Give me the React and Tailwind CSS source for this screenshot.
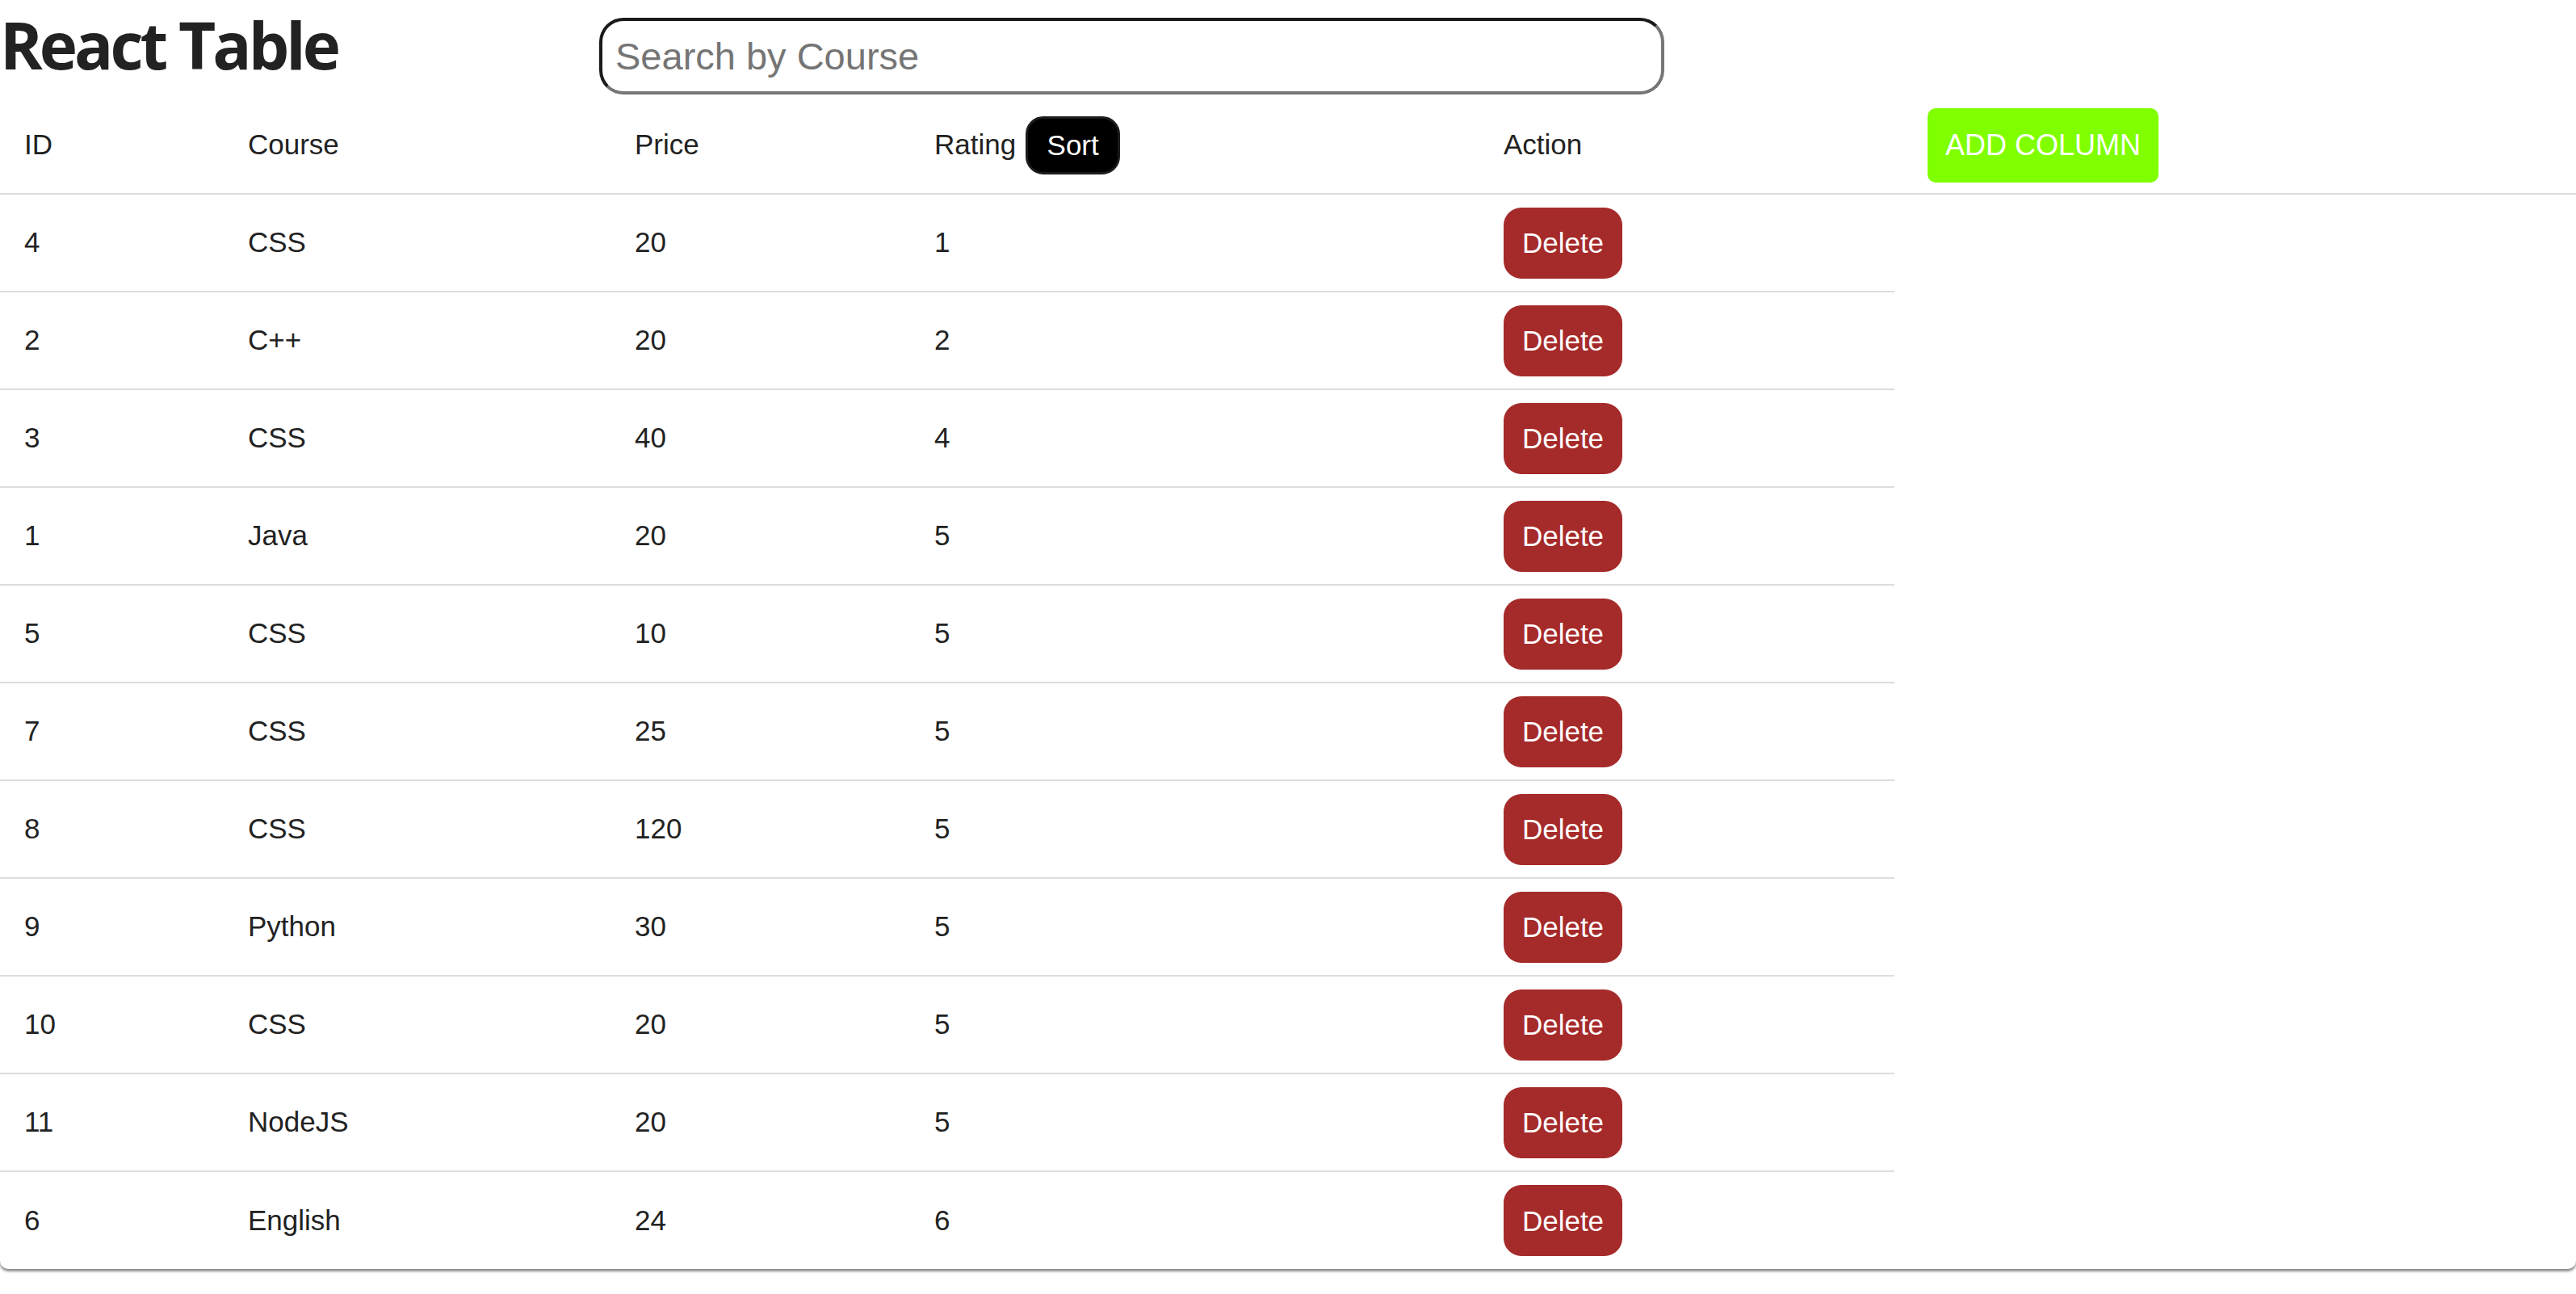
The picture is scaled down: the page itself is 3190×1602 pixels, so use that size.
import { useState } from 'react';

const initialCourses = [
    { id: 4, course: 'CSS', price: 20, rating: 1 },
    { id: 2, course: 'C++', price: 20, rating: 2 },
    { id: 3, course: 'CSS', price: 40, rating: 4 },
    { id: 1, course: 'Java', price: 20, rating: 5 },
    { id: 5, course: 'CSS', price: 10, rating: 5 },
    { id: 7, course: 'CSS', price: 25, rating: 5 },
    { id: 8, course: 'CSS', price: 120, rating: 5 },
    { id: 9, course: 'Python', price: 30, rating: 5 },
    { id: 10, course: 'CSS', price: 20, rating: 5 },
    { id: 11, course: 'NodeJS', price: 20, rating: 5 },
    { id: 6, course: 'English', price: 24, rating: 6 },
];

// column widths follow the screenshot, last column holds the add button
const cols = 'grid grid-cols-[277px_479px_371px_705px_514px]';

export default function App() {
    const [courses, setCourses] = useState(initialCourses);
    const [search, setSearch] = useState('');

    const visible = courses.filter(c =>
        c.course.toLowerCase().includes(search.toLowerCase())
    );

    const handleDelete = (id) => {
        setCourses(prev => prev.filter(c => c.id !== id));
    };

    const handleSort = () => {
        setCourses(prev => [...prev].sort((a, b) => a.rating - b.rating));
    };

    return (
        <div className="min-h-screen bg-white text-[#222] font-['Liberation_Sans',Arial,sans-serif]">
            {/* header : titre + recherche */}
            <div className="flex items-start h-[120px]">
                <h1 className="w-[742px] shrink-0 mt-[15px] text-[80px] leading-none font-bold text-[#222] font-['Open_Sans','Noto_Sans',sans-serif] tracking-[-4px]">
                    React Table
                </h1>
                <input
                    type="text"
                    value={search}
                    onChange={(e) => setSearch(e.target.value)}
                    placeholder="Search by Course"
                    className="mt-[22px] w-[1319px] h-[95px] rounded-[30px] border-4 border-t-[#1a1a1a] border-l-[#1a1a1a] border-b-[#767676] border-r-[#767676] pl-[16px] text-[47px] text-[#222] placeholder:text-[#757575] outline-none"
                />
            </div>

            <div className="w-full rounded-b-[10px] shadow-[0_3px_3px_rgba(0,0,0,0.45)]">
                {/* ligne d'entête */}
                <div className="flex h-[121px] border-b-2 border-[#dddddd] text-[35px]">
                    <div className={`${cols} shrink-0 items-center`}>
                        <div className="pl-[30px]">ID</div>
                        <div className="pl-[30px]">Course</div>
                        <div className="pl-[30px]">Price</div>
                        <div className="pl-[30px] flex items-center">
                            <span>Rating</span>
                            <button
                                onClick={handleSort}
                                className="ml-[12px] h-[72px] w-[117px] rounded-[22px] border-[3px] border-[#1c1c1c] bg-black text-white text-[35px] leading-none"
                            >
                                Sort
                            </button>
                        </div>
                        <div className="pl-[30px]">Action</div>
                    </div>
                    <div className="flex items-center pl-[41px]">
                        <button className="h-[92px] w-[286px] rounded-[10px] bg-[#7fff00] text-white text-[36px] leading-none">
                            ADD COLUMN
                        </button>
                    </div>
                </div>

                {visible.map((c, i) => (
                    <div
                        key={c.id}
                        className={`${cols} w-[2346px] items-center text-[35px] ${i === visible.length - 1 ? 'h-[120px]' : 'h-[121px] border-b-2 border-[#dddddd]'}`}
                    >
                        <div className="pl-[30px]">{c.id}</div>
                        <div className="pl-[30px]">{c.course}</div>
                        <div className="pl-[30px]">{c.price}</div>
                        <div className="pl-[30px]">{c.rating}</div>
                        <div className="pl-[30px]">
                            <button
                                onClick={() => handleDelete(c.id)}
                                className="h-[88px] w-[147px] rounded-[22px] bg-[#a52a2a] text-white text-[35px] leading-none"
                            >
                                Delete
                            </button>
                        </div>
                    </div>
                ))}
            </div>
        </div>
    );
}
